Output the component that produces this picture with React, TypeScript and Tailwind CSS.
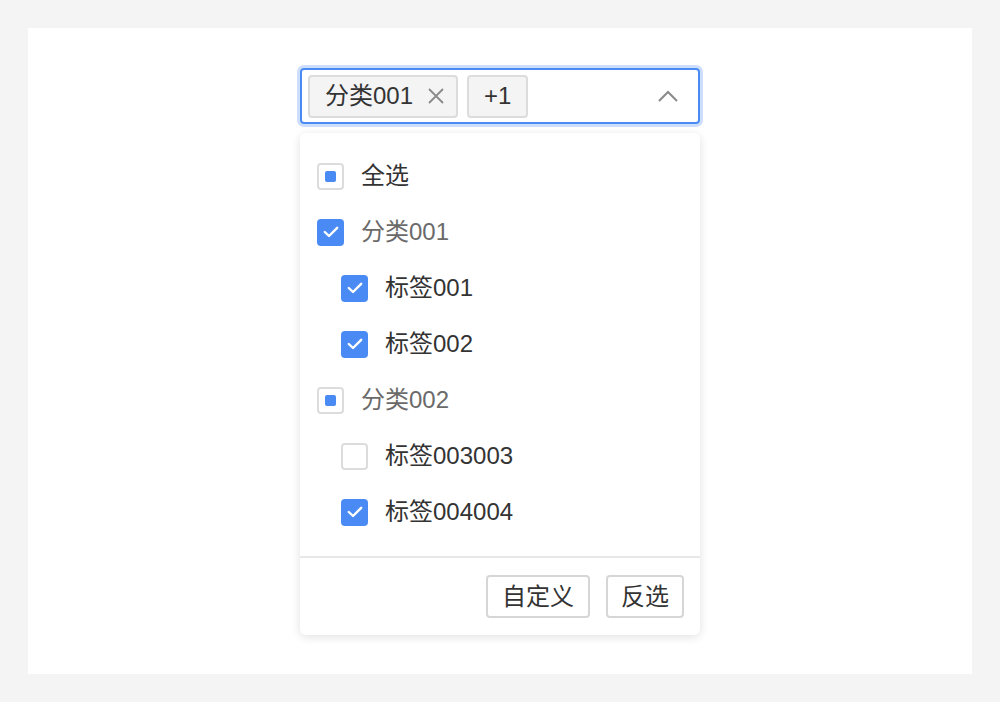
import React from 'react'

type Item = { label: string; state: 'on' | 'off' | 'part'; level: number; group?: boolean }

const items: Item[] = [
  { label: '全选', state: 'part', level: 0 },
  { label: '分类001', state: 'on', level: 0, group: true },
  { label: '标签001', state: 'on', level: 1 },
  { label: '标签002', state: 'on', level: 1 },
  { label: '分类002', state: 'part', level: 0, group: true },
  { label: '标签003003', state: 'off', level: 1 },
  { label: '标签004004', state: 'on', level: 1 },
]

function Box({ state }: { state: Item['state'] }) {
  if (state === 'on') {
    return (
      <span className="w-[27px] h-[27px] rounded-[4px] bg-[#4a8af4] flex items-center justify-center shrink-0">
        <svg width="16" height="12" viewBox="0 0 16 12" fill="none">
          <path d="M1.8 6 L6 10 L14.2 1.8" stroke="white" strokeWidth="2.4" strokeLinecap="round" strokeLinejoin="round" />
        </svg>
      </span>
    )
  }
  return (
    <span className="w-[27px] h-[27px] rounded-[4px] border-2 border-[#dcdcdc] bg-white flex items-center justify-center shrink-0">
      {state === 'part' && <span className="w-[11px] h-[11px] rounded-[2px] bg-[#4a8af4]" />}
    </span>
  )
}

export default function App() {
  return (
    <div className="w-full h-[702px] bg-[#f4f4f4] p-[28px]" style={{ fontFamily: '"Liberation Sans", "Noto Sans CJK SC", sans-serif' }}>
      <div className="w-full h-full bg-white flex flex-col items-center pt-[40px]">
        <div className="w-[400px] h-[56px] rounded-[4px] border-2 border-[#4a8af4] shadow-[0_0_0_3px_rgba(74,138,244,0.28)] flex items-center px-[6px] gap-[9px]">
          <span className="h-[43px] flex items-center rounded-[4px] border-2 border-[#dcdcdc] bg-[#f4f4f4] pl-[15px] pr-[11px] text-[24px] text-[#333]">
            分类001
            <svg className="ml-[14px]" width="18" height="18" viewBox="0 0 18 18">
              <path d="M2 2 L16 16 M16 2 L2 16" stroke="#8a8a8a" strokeWidth="1.8" />
            </svg>
          </span>
          <span className="h-[43px] flex items-center rounded-[4px] border-2 border-[#dcdcdc] bg-[#f4f4f4] px-[15px] text-[24px] text-[#333]">+1</span>
          <svg className="ml-auto mr-[13px]" width="22" height="14" viewBox="0 0 22 14" fill="none">
            <path d="M2 12 L11 3 L20 12" stroke="#8a8a8a" strokeWidth="2" />
          </svg>
        </div>

        <div className="w-[400px] mt-[9px] bg-white rounded-[6px] shadow-[0_2px_10px_rgba(0,0,0,0.12)]">
          <div className="pt-[15px] pb-[16px] border-b-2 border-[#e8e8e8]">
            {items.map((it, i) => (
              <div key={i} className={`h-[56px] flex items-center gap-[17px] ${it.level ? 'pl-[41px]' : 'pl-[17px]'}`}>
                <Box state={it.state} />
                <span className={`text-[24px] ${it.group ? 'text-[#6a6a6a]' : 'text-[#333]'}`}>{it.label}</span>
              </div>
            ))}
          </div>
          <div className="flex justify-end gap-[16px] pt-[17px] pb-[17px] pr-[16px]">
            <button className="h-[43px] px-[14px] rounded-[4px] border-2 border-[#d6d6d6] bg-white text-[24px] text-[#333]">自定义</button>
            <button className="h-[43px] px-[13px] rounded-[4px] border-2 border-[#d6d6d6] bg-white text-[24px] text-[#333]">反选</button>
          </div>
        </div>
      </div>
    </div>
  )
}
